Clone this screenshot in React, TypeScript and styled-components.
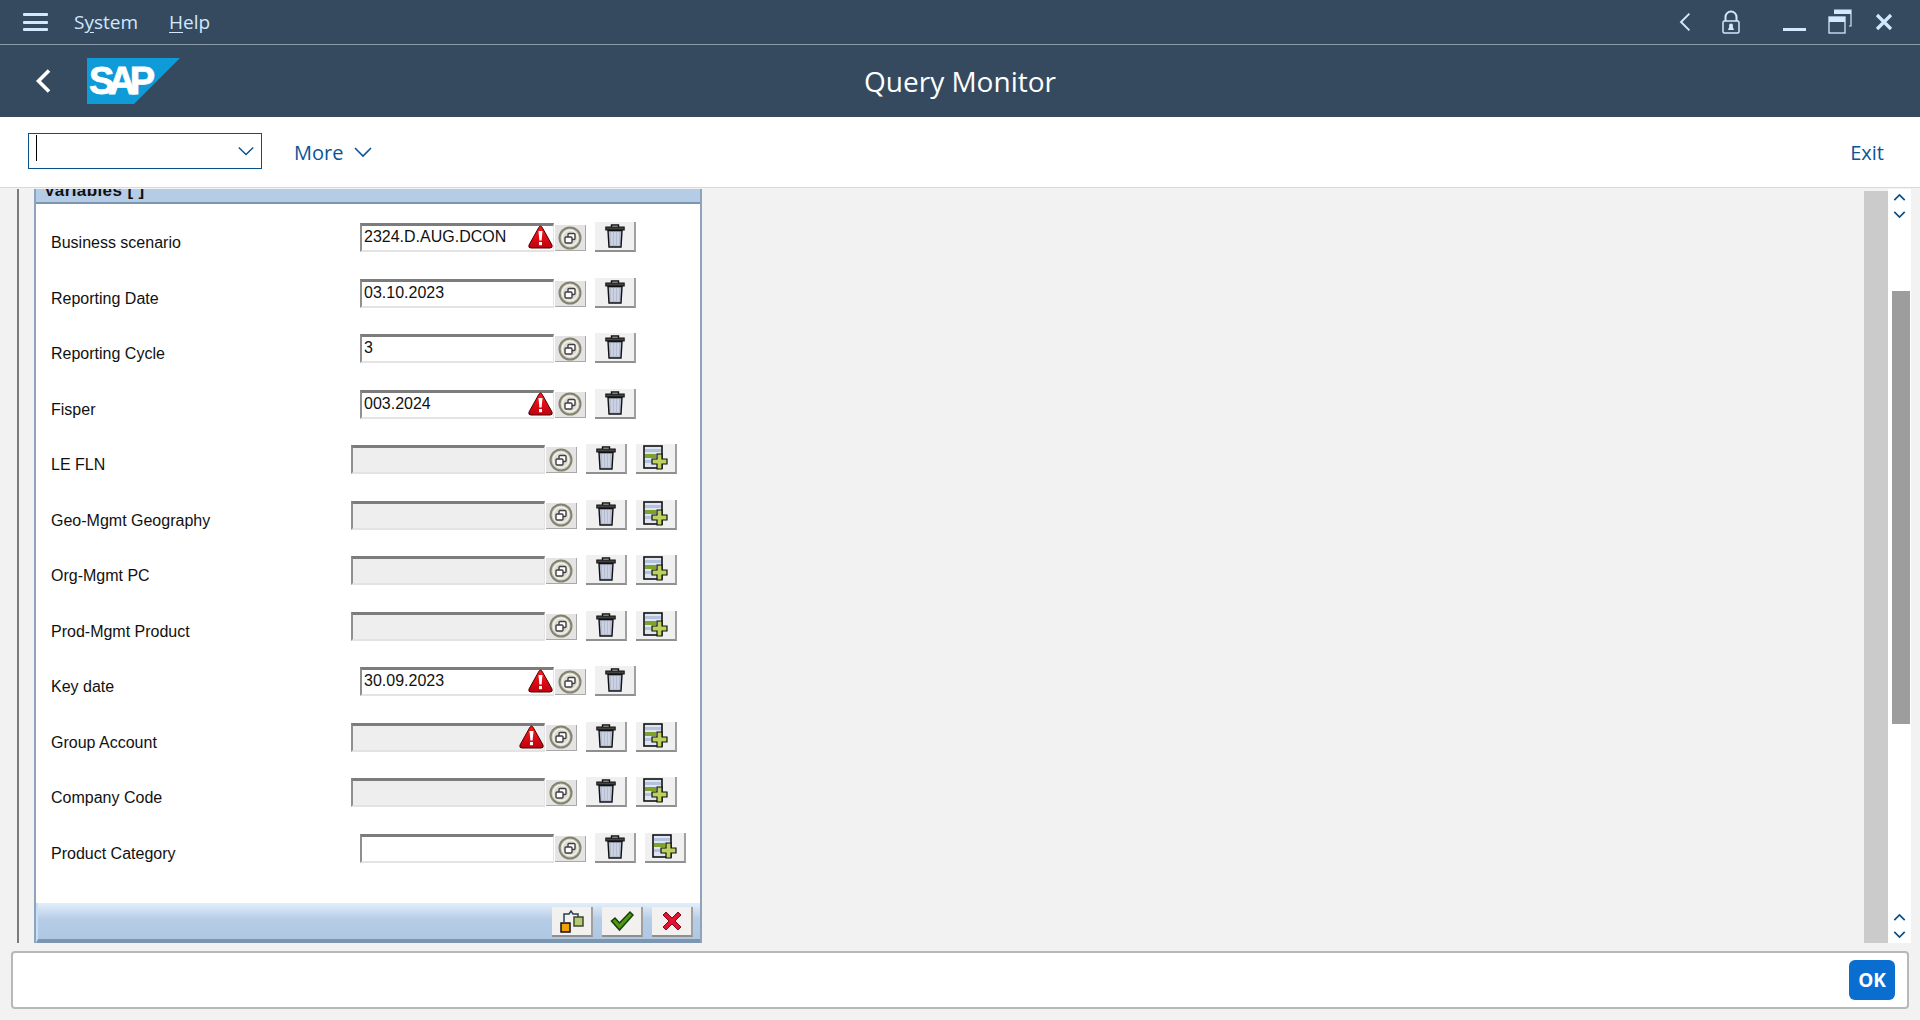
import React from 'react';
import styled, { createGlobalStyle } from 'styled-components';

const GlobalStyle = createGlobalStyle`
  html, body {
    margin: 0;
    padding: 0;
    height: 100%;
    overflow: hidden;
    background: #f2f2f2;
  }
  * { box-sizing: border-box; }
`;

const Page = styled.div`
  width: 1920px;
  height: 1020px;
  display: flex;
  flex-direction: column;
  font-family: "Liberation Sans", Arial, sans-serif;
  background: #f2f2f2;
`;

const MenuBar = styled.div`
  height: 45px;
  flex: none;
  display: flex;
  align-items: center;
  background: #354a5f;
  border-bottom: 1px solid #8a9baa;
  padding: 0 27px 0 23px;
`;

const MenuItem = styled.span`
  font-family: "Open Sans", sans-serif;
  font-size: 19px;
  color: #d1e8ff;
  margin-right: 31px;
  u { text-underline-offset: 3px; }
`;

const BurgerButton = styled.div`
  width: 25px;
  height: 18px;
  margin-right: 26px;
  display: flex;
  flex-direction: column;
  justify-content: space-between;
  span { height: 3px; background: #d1e8ff; border-radius: 1px; }
`;

const WindowIcons = styled.div`
  margin-left: auto;
  display: flex;
  align-items: center;
`;

const IconSlot = styled.span<{ $gap: number }>`
  display: flex;
  margin-left: ${p => p.$gap}px;
`;

const TitleBar = styled.div`
  position: relative;
  height: 72px;
  flex: none;
  display: flex;
  align-items: center;
  background: #354a5f;
  padding-left: 31px;
`;

const LogoBox = styled.div`
  position: relative;
  width: 93px;
  height: 46px;
  margin-left: 26px;
`;

const LogoText = styled.span`
  position: absolute;
  left: 2px;
  top: 3px;
  font-family: "Liberation Sans", sans-serif;
  font-weight: 700;
  font-size: 38px;
  line-height: 40px;
  letter-spacing: -6px;
  color: #fff;
  -webkit-text-stroke: 0.8px #fff;
`;

const PageTitle = styled.div`
  position: absolute;
  left: 0;
  right: 0;
  top: 0;
  line-height: 72px;
  text-align: center;
  font-family: "Open Sans", sans-serif;
  font-size: 28px;
  color: #fff;
`;

const Toolbar = styled.div`
  height: 71px;
  flex: none;
  display: flex;
  align-items: center;
  background: #fff;
  border-bottom: 1px solid #d9d9d9;
  padding: 0 36px 0 28px;
`;

const CommandBox = styled.div`
  width: 234px;
  height: 36px;
  align-self: flex-start;
  margin: 16px 32px 0 0;
  border: 1px solid #0a4f86;
  display: flex;
  align-items: center;
  justify-content: space-between;
  padding: 0 6px 0 7px;
`;

const Caret = styled.span`
  width: 1px;
  height: 26px;
  margin-top: -6px;
  background: #000;
`;

const ToolbarLink = styled.span<{ $end?: boolean }>`
  font-family: "Open Sans", sans-serif;
  font-size: 20px;
  color: #0a5499;
  display: flex;
  align-items: center;
  gap: 10px;
  margin-left: ${p => (p.$end ? 'auto' : '0')};
`;

const Workspace = styled.div`
  flex: 1;
  min-height: 0;
  display: flex;
  padding-top: 1px;
  background: #f2f2f2;
`;

const Gutter = styled.div`
  width: 17px;
  flex: none;
  margin-left: 17px;
  border-left: 2px solid #7b7b7b;
`;

const Panel = styled.div`
  width: 668px;
  flex: none;
  height: 754px;
  background: #fff;
  border-left: 2px solid #8ea4bc;
  border-right: 2px solid #8ea4bc;
  display: flex;
  flex-direction: column;
`;

const PanelHead = styled.div`
  height: 15px;
  flex: none;
  background: #b5cce6;
  border-bottom: 2px solid #7d96b0;
  overflow: hidden;
  padding-left: 8px;
`;

const PanelHeadText = styled.div`
  margin-top: -8px;
  font-size: 17px;
  line-height: 20px;
  font-weight: 700;
  letter-spacing: 0.4px;
  color: #111;
`;

const Rows = styled.div`
  flex: 1;
  padding-top: 19px;
`;

const Row = styled.div`
  height: 55.5px;
  display: flex;
  align-items: flex-start;
`;

const Label = styled.div<{ $shift: boolean }>`
  width: ${p => (p.$shift ? '315px' : '324px')};
  padding-left: 15px;
  padding-top: 10px;
  flex: none;
  font-size: 16px;
  line-height: 20px;
  color: #111;
`;

const Field = styled.div<{ $disabled: boolean }>`
  position: relative;
  width: 194px;
  height: 29px;
  flex: none;
  border-top: 3px solid #7c7c7c;
  border-left: 2px solid #8f8f8f;
  border-bottom: 2px solid #e3e3e3;
  border-right: 1px solid #e3e3e3;
  background: ${p => (p.$disabled ? '#eeeeee' : '#fff')};
  padding-left: 2px;
  font-size: 16px;
  line-height: 22px;
  color: #111;
`;

const WarningSlot = styled.span`
  position: absolute;
  right: 0;
  top: -1px;
  display: flex;
`;

const ValueHelp = styled.div`
  width: 31px;
  height: 26px;
  margin: 2px 9px 0 1px;
  flex: none;
  display: flex;
  align-items: center;
  justify-content: center;
  background: #e4e4e4;
  border-right: 1px solid #a8a8a8;
  border-bottom: 1px solid #a8a8a8;
`;

const ToolButton = styled.div`
  width: 41px;
  height: 30px;
  margin-right: 9px;
  margin-top: -1px;
  flex: none;
  display: flex;
  align-items: center;
  justify-content: center;
  background: #f0f0f0;
  border-right: 2px solid #a0a0a0;
  border-bottom: 2px solid #8f8f8f;
`;

const PanelFoot = styled.div`
  height: 40px;
  flex: none;
  display: flex;
  justify-content: flex-end;
  align-items: flex-start;
  gap: 9px;
  padding: 4px 7px 0 0;
  background: linear-gradient(#e3eefa 0%, #b6cde6 45%, #afc7e2 100%);
  border-bottom: 4px solid #7d96b0;
  border-left: 2px solid #c6e0fb;
  ${ToolButton} {
    margin: 0;
    background: #f3f1ef;
  }
`;

const Filler = styled.div`
  flex: 1;
`;

const VerticalTrack = styled.div`
  width: 24px;
  flex: none;
  height: 752px;
  margin-top: 2px;
  background: #cbcbcb;
`;

const Scrollbar = styled.div`
  width: 23px;
  flex: none;
  height: 754px;
  margin-right: 9px;
  display: flex;
  flex-direction: column;
  background: #fff;
`;

const ArrowPair = styled.div`
  height: 34px;
  flex: none;
  display: flex;
  flex-direction: column;
  align-items: center;
  justify-content: center;
  gap: 4px;
`;

const ScrollLane = styled.div`
  flex: 1;
  padding: 68px 1px 0 4px;
`;

const Thumb = styled.div`
  height: 433px;
  background: #9d9d9d;
`;

const Footer = styled.div`
  flex: none;
  height: 77px;
  padding: 8px 11px 11px 11px;
  background: #f2f2f2;
`;

const StatusBox = styled.div`
  height: 58px;
  background: #fff;
  border: 2px solid #b8b8b8;
  border-radius: 4px;
  display: flex;
  align-items: center;
  justify-content: flex-end;
  padding-right: 12px;
`;

const OkButton = styled.div`
  width: 46px;
  height: 40px;
  background: #0a6ed1;
  border-radius: 6px;
  color: #fff;
  font-family: "Open Sans", sans-serif;
  font-size: 19px;
  font-weight: 700;
  line-height: 40px;
  text-align: center;
`;

const Chevron = ({ dir, size = 18, color = '#d1e8ff', w = 2 }: { dir: 'left' | 'down' | 'up'; size?: number; color?: string; w?: number }) => {
  const d = dir === 'left' ? 'M12 3 L5 10 L12 17' : dir === 'down' ? 'M2 6 L10 14 L18 6' : 'M2 14 L10 6 L18 14';
  return (
    <svg width={size} height={size} viewBox="0 0 20 20" fill="none" stroke={color} strokeWidth={w}>
      <path d={d} />
    </svg>
  );
};

const LockIcon = () => (
  <svg width="18" height="24" viewBox="0 0 18 24">
    <path d="M3.5 11 V7 a5.5 5.5 0 0 1 11 0 V11" fill="none" stroke="#d1e8ff" strokeWidth="2" />
    <rect x="1" y="11" width="16" height="12" rx="1.5" fill="none" stroke="#d1e8ff" strokeWidth="1.5" />
    <circle cx="9" cy="15.5" r="2" fill="#d1e8ff" />
    <path d="M6 20 h6 l-1.5-4 h-3 z" fill="#d1e8ff" />
  </svg>
);

const MinimizeIcon = () => (
  <svg width="24" height="24" viewBox="0 0 24 24">
    <rect x="0" y="18" width="23" height="3" fill="#d1e8ff" />
  </svg>
);

const RestoreIcon = () => (
  <svg width="24" height="26" viewBox="0 0 24 26">
    <path d="M6 1 h17 v16 h-2" fill="none" stroke="#d1e8ff" strokeWidth="1.2" />
    <rect x="6" y="1" width="17" height="4" fill="#d1e8ff" />
    <rect x="1" y="8" width="16" height="16" fill="#354a5f" stroke="#d1e8ff" strokeWidth="1.3" />
    <rect x="1" y="8" width="16" height="5" fill="#d1e8ff" />
  </svg>
);

const CloseIcon = () => (
  <svg width="18" height="18" viewBox="0 0 18 18">
    <path d="M2 2 L16 16 M16 2 L2 16" stroke="#d1e8ff" strokeWidth="3.2" />
  </svg>
);

const WarningIcon = () => (
  <svg width="25" height="24" viewBox="0 0 25 24">
    <defs>
      <linearGradient id="warn" x1="0" y1="0" x2="0" y2="1">
        <stop offset="0" stopColor="#ff1a1a" />
        <stop offset="1" stopColor="#c00010" />
      </linearGradient>
    </defs>
    <path d="M12.5 1 Q13.5 1 14.5 3 L24 20 Q25 23 22 23 H3 Q0 23 1 20 L10.5 3 Q11.5 1 12.5 1 Z" fill="url(#warn)" stroke="#4a0000" strokeWidth="1" />
    <path d="M10.5 6 H14.5 L13.6 15.5 H11.4 Z" fill="#fff" />
    <rect x="11" y="17" width="3" height="3.2" fill="#fff" />
  </svg>
);

const HelpIcon = () => (
  <svg width="24" height="24" viewBox="0 0 24 24">
    <circle cx="12" cy="12" r="10.5" fill="#cfcdbf" stroke="#85836f" strokeWidth="2" />
    <circle cx="12" cy="12" r="7.8" fill="#dcdbd5" stroke="#f4f4f0" strokeWidth="1.2" />
    <rect x="10" y="7.5" width="7" height="6" rx="1" fill="#fff" stroke="#3f3f3f" strokeWidth="1.4" />
    <rect x="7" y="11" width="7" height="6" rx="1" fill="#fff" stroke="#3f3f3f" strokeWidth="1.4" />
  </svg>
);

const TrashIcon = () => (
  <svg width="20" height="24" viewBox="0 0 20 24">
    <path d="M6.5 3 V1 h7 V3" fill="none" stroke="#111" strokeWidth="1.4" />
    <rect x="0.8" y="3" width="18.4" height="3" fill="#444" stroke="#111" strokeWidth="1" />
    <path d="M3 6.5 H17 L16 23 H4 Z" fill="#b5bdd2" stroke="#111" strokeWidth="1.4" />
    <path d="M7 8 V21 M10 8 V21 M13 8 V21" stroke="#e3e6ef" strokeWidth="1" />
  </svg>
);

const AddRowIcon = () => (
  <svg width="26" height="26" viewBox="0 0 26 26">
    <rect x="1" y="1" width="18" height="22" fill="#dfe6f2" stroke="#111" strokeWidth="1.6" />
    <rect x="2" y="4" width="16" height="3" fill="#b3c3dd" />
    <rect x="2" y="9" width="11" height="4" fill="#7ea32c" />
    <rect x="2" y="15" width="16" height="3" fill="#b3c3dd" />
    <path d="M14 9 h5 v5 h5 v5 h-5 v5 h-5 v-5 h-5 v-5 h5 z" fill="#bcd25a" stroke="#111" strokeWidth="1.2" />
  </svg>
);

const TreeIcon = () => (
  <svg width="24" height="26" viewBox="0 0 24 26">
    <path d="M4 14 V6 H9 L11 3 L13 6 H18 V9" fill="none" stroke="#2a3c55" strokeWidth="1.5" />
    <rect x="1" y="15" width="9" height="9" fill="#f2a007" stroke="#111" strokeWidth="1.5" />
    <rect x="14" y="9" width="9" height="9" fill="#b4c97a" stroke="#3c4a26" strokeWidth="1.5" />
  </svg>
);

const CheckIcon = () => (
  <svg width="24" height="22" viewBox="0 0 24 22">
    <path d="M1.5 11 L5 8 L9.5 13 L20 2 L23 5 L9.5 20 Z" fill="#4f9a12" stroke="#173f06" strokeWidth="1.5" />
  </svg>
);

const CancelIcon = () => (
  <svg width="20" height="20" viewBox="0 0 20 20">
    <path d="M4 1 L10 7 L16 1 L19 4 L13 10 L19 16 L16 19 L10 13 L4 19 L1 16 L7 10 L1 4 Z" fill="#e3122e" stroke="#7c0d1c" strokeWidth="1" />
  </svg>
);

type Variable = {
  label: string;
  value?: string;
  warning?: boolean;
  disabled?: boolean;
  add?: boolean;
};

const variables: Variable[] = [
  { label: 'Business scenario', value: '2324.D.AUG.DCON', warning: true },
  { label: 'Reporting Date', value: '03.10.2023' },
  { label: 'Reporting Cycle', value: '3' },
  { label: 'Fisper', value: '003.2024', warning: true },
  { label: 'LE FLN', disabled: true, add: true },
  { label: 'Geo-Mgmt Geography', disabled: true, add: true },
  { label: 'Org-Mgmt PC', disabled: true, add: true },
  { label: 'Prod-Mgmt Product', disabled: true, add: true },
  { label: 'Key date', value: '30.09.2023', warning: true },
  { label: 'Group Account', disabled: true, add: true, warning: true },
  { label: 'Company Code', disabled: true, add: true },
  { label: 'Product Category', add: true },
];

export default function App() {
  return (
    <Page>
      <GlobalStyle />
      <MenuBar>
        <BurgerButton><span /><span /><span /></BurgerButton>
        <MenuItem>S<u>y</u>stem</MenuItem>
        <MenuItem><u>H</u>elp</MenuItem>
        <WindowIcons>
          <Chevron dir="left" size={24} w={1.6} />
          <IconSlot $gap={23}><LockIcon /></IconSlot>
          <IconSlot $gap={43}><MinimizeIcon /></IconSlot>
          <IconSlot $gap={21}><RestoreIcon /></IconSlot>
          <IconSlot $gap={23}><CloseIcon /></IconSlot>
        </WindowIcons>
      </MenuBar>
      <TitleBar>
        <Chevron dir="left" size={30} w={2.4} color="#fff" />
        <LogoBox>
          <svg width="93" height="46" viewBox="0 0 93 46">
            <path d="M0 0 H93 L47 46 H0 Z" fill="#0f9bd7" />
          </svg>
          <LogoText>SAP</LogoText>
        </LogoBox>
        <PageTitle>Query Monitor</PageTitle>
      </TitleBar>
      <Toolbar>
        <CommandBox>
          <Caret />
          <Chevron dir="down" size={18} w={1.5} color="#0a4f86" />
        </CommandBox>
        <ToolbarLink>More <Chevron dir="down" size={20} w={1.6} color="#0a5499" /></ToolbarLink>
        <ToolbarLink $end>Exit</ToolbarLink>
      </Toolbar>
      <Workspace>
        <Gutter />
        <Panel>
          <PanelHead><PanelHeadText>Variables [ ]</PanelHeadText></PanelHead>
          <Rows>
            {variables.map(v => (
              <Row key={v.label}>
                <Label $shift={!!v.disabled}>{v.label}</Label>
                <Field $disabled={!!v.disabled}>
                  {v.value}
                  {v.warning && <WarningSlot><WarningIcon /></WarningSlot>}
                </Field>
                <ValueHelp><HelpIcon /></ValueHelp>
                <ToolButton><TrashIcon /></ToolButton>
                {v.add && <ToolButton><AddRowIcon /></ToolButton>}
              </Row>
            ))}
          </Rows>
          <PanelFoot>
            <ToolButton><TreeIcon /></ToolButton>
            <ToolButton><CheckIcon /></ToolButton>
            <ToolButton><CancelIcon /></ToolButton>
          </PanelFoot>
        </Panel>
        <Filler />
        <VerticalTrack />
        <Scrollbar>
          <ArrowPair>
            <Chevron dir="up" size={13} w={2.6} color="#0a4f86" />
            <Chevron dir="down" size={13} w={2.6} color="#0a4f86" />
          </ArrowPair>
          <ScrollLane><Thumb /></ScrollLane>
          <ArrowPair>
            <Chevron dir="up" size={13} w={2.6} color="#0a4f86" />
            <Chevron dir="down" size={13} w={2.6} color="#0a4f86" />
          </ArrowPair>
        </Scrollbar>
      </Workspace>
      <Footer>
        <StatusBox><OkButton>OK</OkButton></StatusBox>
      </Footer>
    </Page>
  );
}
